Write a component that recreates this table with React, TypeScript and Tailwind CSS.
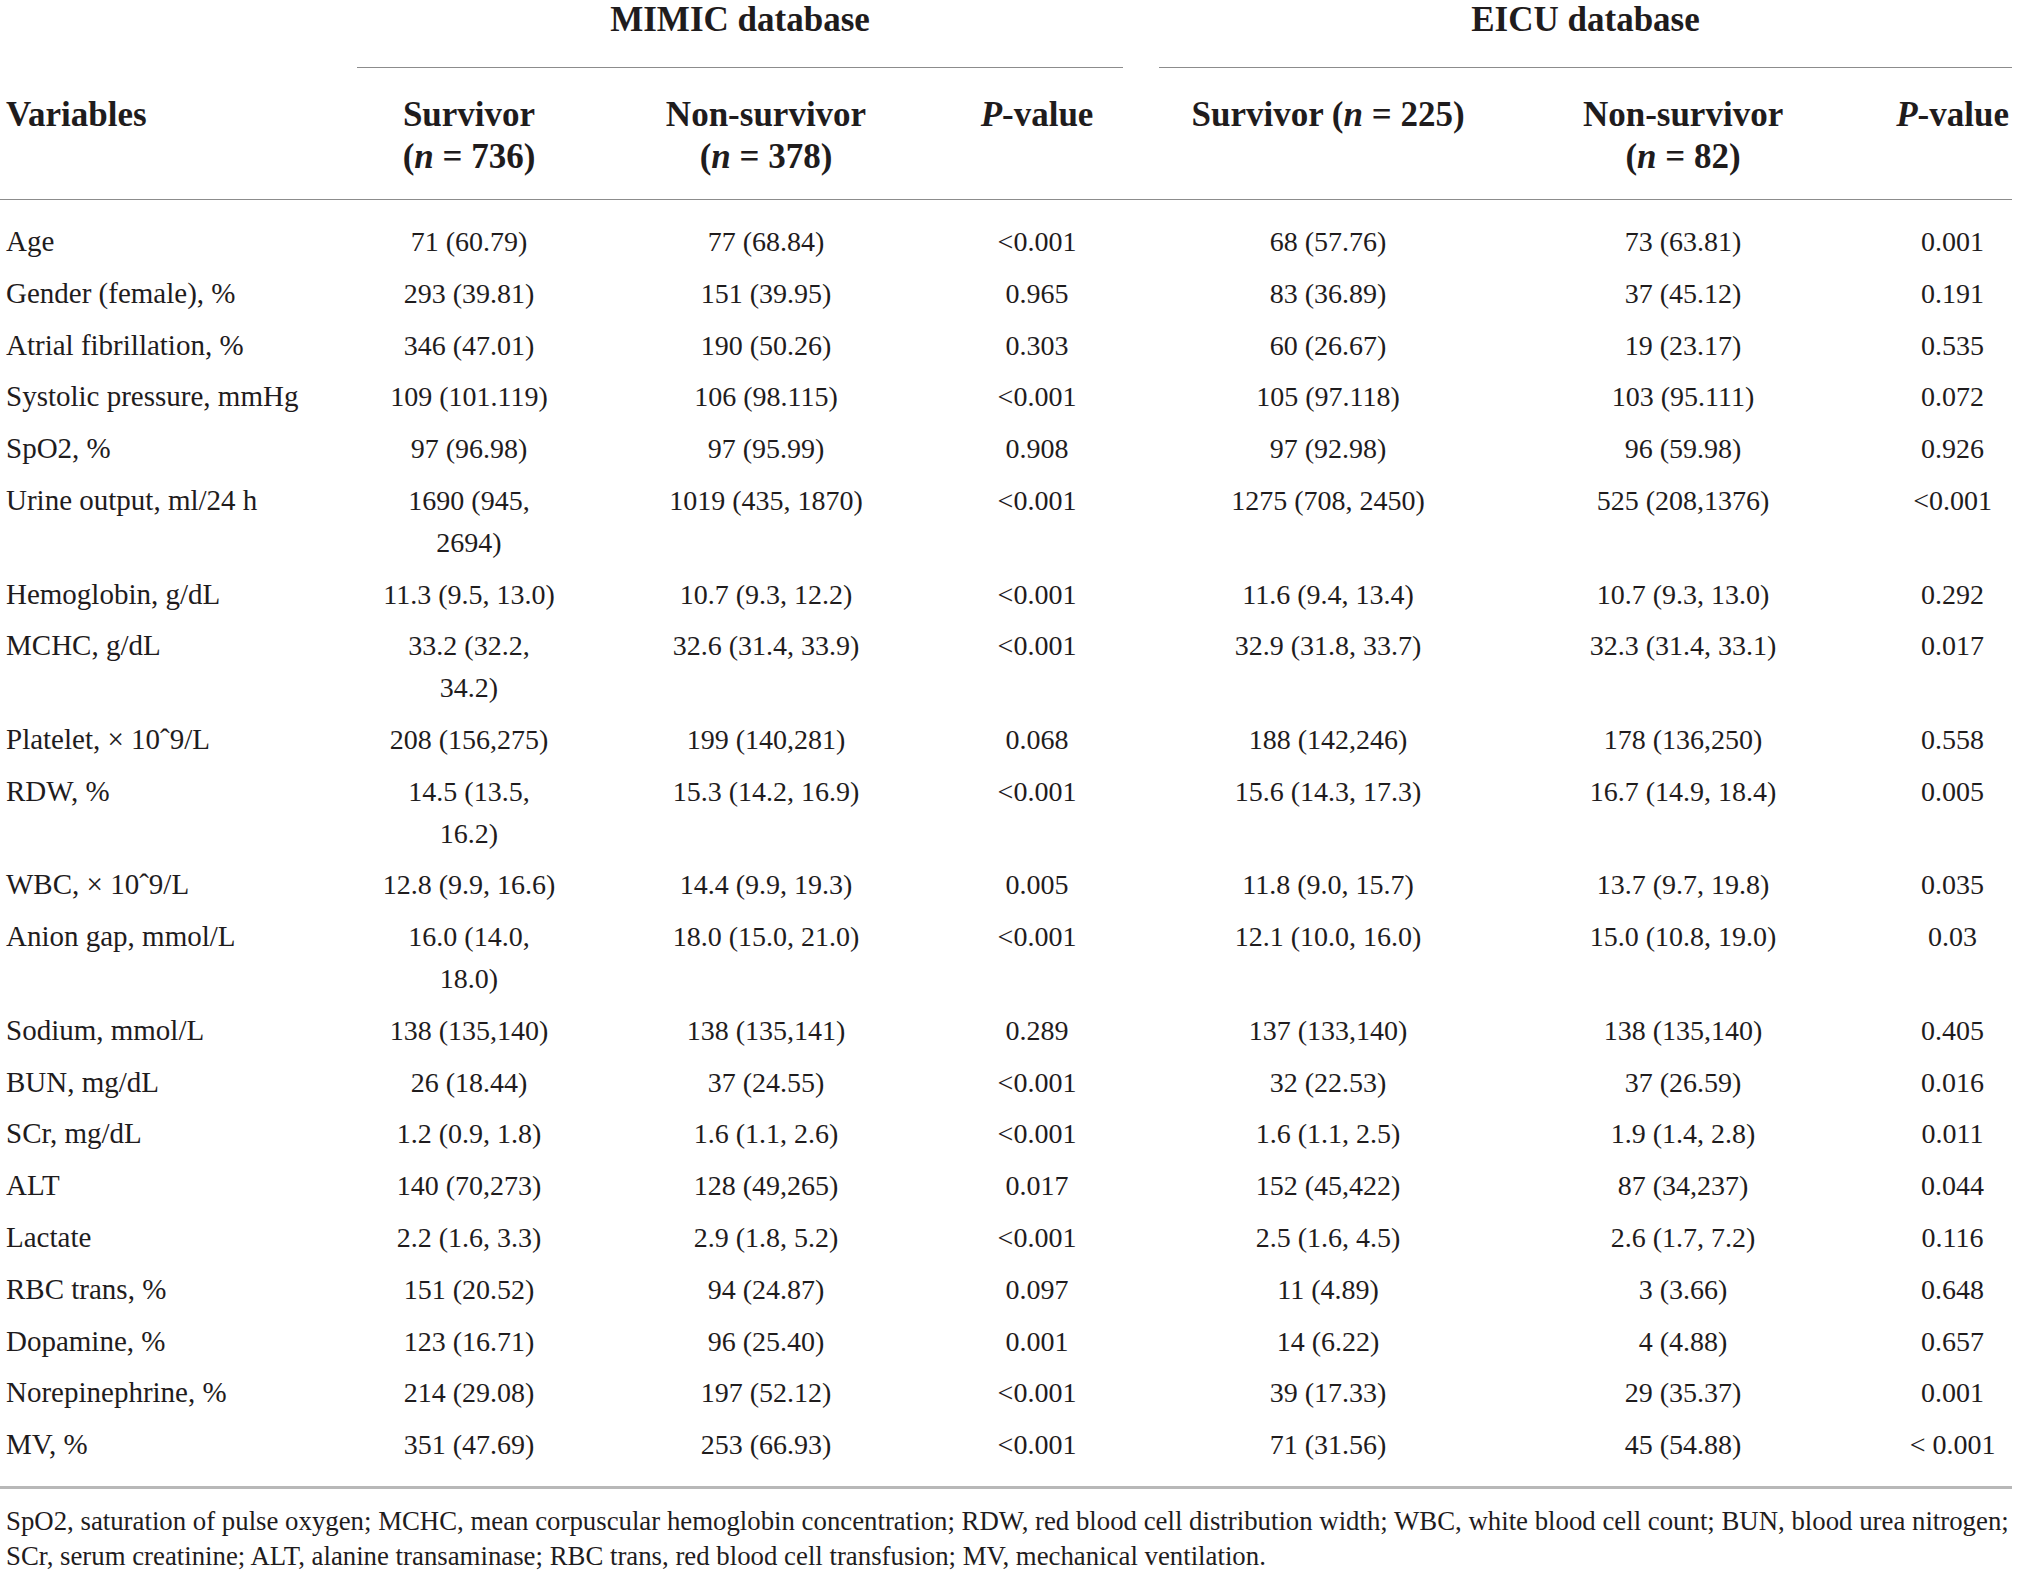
const rows: string[][] = [
  ['Age', '71 (60.79)', '77 (68.84)', '<0.001', '68 (57.76)', '73 (63.81)', '0.001'],
  ['Gender (female), %', '293 (39.81)', '151 (39.95)', '0.965', '83 (36.89)', '37 (45.12)', '0.191'],
  ['Atrial fibrillation, %', '346 (47.01)', '190 (50.26)', '0.303', '60 (26.67)', '19 (23.17)', '0.535'],
  ['Systolic pressure, mmHg', '109 (101.119)', '106 (98.115)', '<0.001', '105 (97.118)', '103 (95.111)', '0.072'],
  ['SpO2, %', '97 (96.98)', '97 (95.99)', '0.908', '97 (92.98)', '96 (59.98)', '0.926'],
  ['Urine output, ml/24 h', '1690 (945,\n2694)', '1019 (435, 1870)', '<0.001', '1275 (708, 2450)', '525 (208,1376)', '<0.001'],
  ['Hemoglobin, g/dL', '11.3 (9.5, 13.0)', '10.7 (9.3, 12.2)', '<0.001', '11.6 (9.4, 13.4)', '10.7 (9.3, 13.0)', '0.292'],
  ['MCHC, g/dL', '33.2 (32.2,\n34.2)', '32.6 (31.4, 33.9)', '<0.001', '32.9 (31.8, 33.7)', '32.3 (31.4, 33.1)', '0.017'],
  ['Platelet, × 10ˆ9/L', '208 (156,275)', '199 (140,281)', '0.068', '188 (142,246)', '178 (136,250)', '0.558'],
  ['RDW, %', '14.5 (13.5,\n16.2)', '15.3 (14.2, 16.9)', '<0.001', '15.6 (14.3, 17.3)', '16.7 (14.9, 18.4)', '0.005'],
  ['WBC, × 10ˆ9/L', '12.8 (9.9, 16.6)', '14.4 (9.9, 19.3)', '0.005', '11.8 (9.0, 15.7)', '13.7 (9.7, 19.8)', '0.035'],
  ['Anion gap, mmol/L', '16.0 (14.0,\n18.0)', '18.0 (15.0, 21.0)', '<0.001', '12.1 (10.0, 16.0)', '15.0 (10.8, 19.0)', '0.03'],
  ['Sodium, mmol/L', '138 (135,140)', '138 (135,141)', '0.289', '137 (133,140)', '138 (135,140)', '0.405'],
  ['BUN, mg/dL', '26 (18.44)', '37 (24.55)', '<0.001', '32 (22.53)', '37 (26.59)', '0.016'],
  ['SCr, mg/dL', '1.2 (0.9, 1.8)', '1.6 (1.1, 2.6)', '<0.001', '1.6 (1.1, 2.5)', '1.9 (1.4, 2.8)', '0.011'],
  ['ALT', '140 (70,273)', '128 (49,265)', '0.017', '152 (45,422)', '87 (34,237)', '0.044'],
  ['Lactate', '2.2 (1.6, 3.3)', '2.9 (1.8, 5.2)', '<0.001', '2.5 (1.6, 4.5)', '2.6 (1.7, 7.2)', '0.116'],
  ['RBC trans, %', '151 (20.52)', '94 (24.87)', '0.097', '11 (4.89)', '3 (3.66)', '0.648'],
  ['Dopamine, %', '123 (16.71)', '96 (25.40)', '0.001', '14 (6.22)', '4 (4.88)', '0.657'],
  ['Norepinephrine, %', '214 (29.08)', '197 (52.12)', '<0.001', '39 (17.33)', '29 (35.37)', '0.001'],
  ['MV, %', '351 (47.69)', '253 (66.93)', '<0.001', '71 (31.56)', '45 (54.88)', '< 0.001'],
];

// horizontal padding per column, keeps the text centres where the print has them
const cellPad = [
  'pl-[6px] pr-[10px] text-left',
  'px-[18px] text-center',
  'px-[18px] text-center',
  'px-[18px] text-center',
  'px-[18px] text-center',
  'px-[18px] text-center',
  'pl-[42px] pr-0 text-center',
];

function N({ value }: { value: string }) {
  return (
    <>
      (<i>n</i> = {value})
    </>
  );
}

function PValue() {
  return (
    <>
      <i>P</i>-value
    </>
  );
}

export default function App() {
  return (
    <div className="w-[2019px] h-[1575px] overflow-hidden bg-white text-[#1f1c1d] font-['Liberation_Serif',serif]">
      <table className="w-[2012px] table-fixed border-collapse">
        <colgroup>
          <col className="w-[339px]" />
          <col className="w-[260px]" />
          <col className="w-[334px]" />
          <col className="w-[208px]" />
          <col className="w-[374px]" />
          <col className="w-[336px]" />
          <col className="w-[161px]" />
        </colgroup>
        <thead className="text-[35px] font-bold">
          <tr>
            <th className="p-0" />
            <th colSpan={3} className="px-[18px] py-0 font-bold">
              <div className="leading-[40px] pb-[27px] border-b-[1.5px] border-[#8c8c8c]">MIMIC database</div>
            </th>
            <th colSpan={3} className="pl-[18px] pr-0 py-0 font-bold">
              <div className="leading-[40px] pb-[27px] border-b-[1.5px] border-[#8c8c8c]">EICU database</div>
            </th>
          </tr>
          <tr className="border-b-[1.5px] border-[#8c8c8c] leading-[42px] align-top">
            <th className={`${cellPad[0]} pt-[26px] pb-[21px] font-bold`}>Variables</th>
            <th className={`${cellPad[1]} pt-[26px] pb-[21px] font-bold`}>
              Survivor
              <br />
              <N value="736" />
            </th>
            <th className={`${cellPad[2]} pt-[26px] pb-[21px] font-bold`}>
              Non-survivor
              <br />
              <N value="378" />
            </th>
            <th className={`${cellPad[3]} pt-[26px] pb-[21px] font-bold`}>
              <PValue />
            </th>
            <th className={`${cellPad[4]} pt-[26px] pb-[21px] font-bold whitespace-nowrap`}>
              Survivor <N value="225" />
            </th>
            <th className={`${cellPad[5]} pt-[26px] pb-[21px] font-bold`}>
              Non-survivor
              <br />
              <N value="82" />
            </th>
            <th className={`${cellPad[6]} pt-[26px] pb-[21px] font-bold whitespace-nowrap`}>
              <PValue />
            </th>
          </tr>
        </thead>
        <tbody className="text-[28px] leading-[41.8px]">
          {rows.map((row, i) => {
            const first = i === 0;
            const last = i === rows.length - 1;
            return (
              <tr key={row[0]} className={last ? 'border-b-[3px] border-[#b8b8b8]' : ''}>
                {row.map((cell, j) => (
                  <td
                    key={j}
                    className={`${cellPad[j]} ${j === 0 ? 'text-[29px]' : ''} ${first ? 'pt-[21px]' : 'pt-[5px]'} ${last ? 'pb-[20px]' : 'pb-[5px]'} align-top whitespace-pre`}
                  >
                    {cell}
                  </td>
                ))}
              </tr>
            );
          })}
        </tbody>
      </table>

      {/* Footnote */}
      <div className="mt-[15px] pl-[6px] text-[26.8px] leading-[35px]">
        <p className="whitespace-nowrap">
          SpO2, saturation of pulse oxygen; MCHC, mean corpuscular hemoglobin concentration; RDW, red blood cell distribution width; WBC, white blood cell count; BUN, blood urea nitrogen;
        </p>
        <p className="whitespace-nowrap">
          SCr, serum creatinine; ALT, alanine transaminase; RBC trans, red blood cell transfusion; MV, mechanical ventilation.
        </p>
      </div>
    </div>
  );
}
